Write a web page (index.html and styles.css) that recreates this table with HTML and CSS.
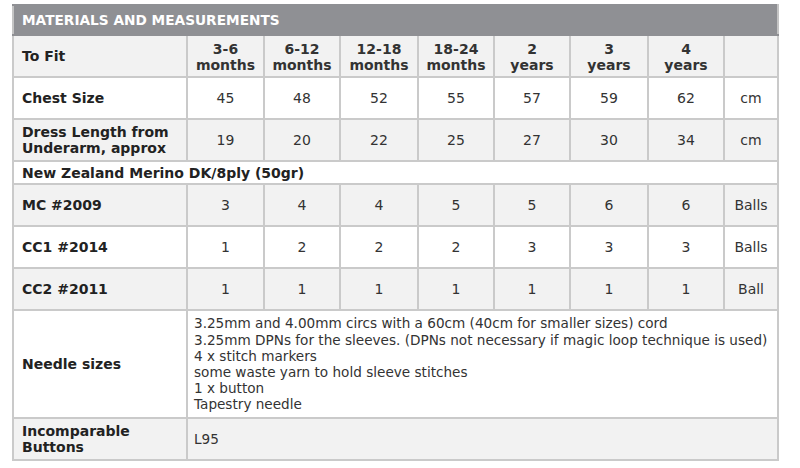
FILE: index.html
```html
<!DOCTYPE html>
<html>
<head>
<meta charset="utf-8">
<link rel="stylesheet" href="styles.css">
</head>
<body>
<div class="wrap">
<table class="mm">
  <colgroup>
    <col class="c-label">
    <col class="c-a"><col class="c-b"><col class="c-c"><col class="c-d">
    <col class="c-e"><col class="c-f"><col class="c-g"><col class="c-unit">
  </colgroup>
  <tr class="title-row"><th colspan="9" class="title">MATERIALS AND MEASUREMENTS</th></tr>
  <tr class="row gray">
    <th class="lbl">To Fit</th>
    <th class="hd">3-6<br>months</th>
    <th class="hd">6-12<br>months</th>
    <th class="hd">12-18<br>months</th>
    <th class="hd">18-24<br>months</th>
    <th class="hd">2<br>years</th>
    <th class="hd">3<br>years</th>
    <th class="hd">4<br>years</th>
    <th class="hd"></th>
  </tr>
  <tr class="row white">
    <th class="lbl">Chest Size</th>
    <td>45</td><td>48</td><td>52</td><td>55</td><td>57</td><td>59</td><td>62</td><td>cm</td>
  </tr>
  <tr class="row gray">
    <th class="lbl">Dress Length from Underarm, approx</th>
    <td>19</td><td>20</td><td>22</td><td>25</td><td>27</td><td>30</td><td>34</td><td>cm</td>
  </tr>
  <tr class="sub white">
    <th colspan="9" class="lbl">New Zealand Merino DK/8ply (50gr)</th>
  </tr>
  <tr class="row gray">
    <th class="lbl">MC #2009</th>
    <td>3</td><td>4</td><td>4</td><td>5</td><td>5</td><td>6</td><td>6</td><td>Balls</td>
  </tr>
  <tr class="row white">
    <th class="lbl">CC1 #2014</th>
    <td>1</td><td>2</td><td>2</td><td>2</td><td>3</td><td>3</td><td>3</td><td>Balls</td>
  </tr>
  <tr class="row gray">
    <th class="lbl">CC2 #2011</th>
    <td>1</td><td>1</td><td>1</td><td>1</td><td>1</td><td>1</td><td>1</td><td>Ball</td>
  </tr>
  <tr class="needle white">
    <th class="lbl">Needle sizes</th>
    <td colspan="8" class="txt">3.25mm and 4.00mm circs with a 60cm (40cm for smaller sizes) cord<br>3.25mm DPNs for the sleeves. (DPNs not necessary if magic loop technique is used)<br>4 x stitch markers<br>some waste yarn to hold sleeve stitches<br>1 x button<br>Tapestry needle</td>
  </tr>
  <tr class="row gray">
    <th class="lbl">Incomparable Buttons</th>
    <td colspan="8" class="txt">L95</td>
  </tr>
</table>
</div>
</body>
</html>
```

FILE: styles.css
```css
html, body {
  margin: 0;
  padding: 0;
  background: #ffffff;
}
.wrap {
  padding: 4px 0 0 12px;
}
.mm {
  border-collapse: collapse;
  table-layout: fixed;
  width: 765px;
  font-family: "DejaVu Sans", Verdana, sans-serif;
  font-size: 14px;
  color: #333333;
  border: 2px solid #c4c4c4;
}
.c-label { width: 174px; }
.c-a { width: 77px; }
.c-b { width: 76px; }
.c-c { width: 78px; }
.c-d { width: 76px; }
.c-e { width: 76px; }
.c-f { width: 78px; }
.c-g { width: 76px; }
.c-unit { width: 54px; }

.mm th, .mm td {
  border: 2px solid #cacaca;
  padding: 0;
}
.title-row { height: 30px; }
.mm .title {
  background: #8f9094;
  color: #ffffff;
  text-align: left;
  padding-left: 8px;
  font-size: 13.7px;
  font-weight: bold;
  border-color: #8f9094 #c4c4c4;
}
.row { height: 42px; }
.sub { height: 23px; }
.needle { height: 108px; }
.gray { background: #f2f2f2; }
.white { background: #ffffff; }
.mm .lbl {
  text-align: left;
  font-weight: bold;
  color: #222222;
  padding-left: 8px;
  padding-right: 6px;
  line-height: 16px;
}
.mm .hd {
  font-weight: bold;
  color: #333333;
  text-align: center;
  line-height: 16px;
  padding-top: 2px;
}
.mm td {
  text-align: center;
  line-height: 16px;
}
.mm td.txt {
  text-align: left;
  padding-left: 6px;
  font-size: 13.6px;
  white-space: nowrap;
  line-height: 16.2px;
}
```
